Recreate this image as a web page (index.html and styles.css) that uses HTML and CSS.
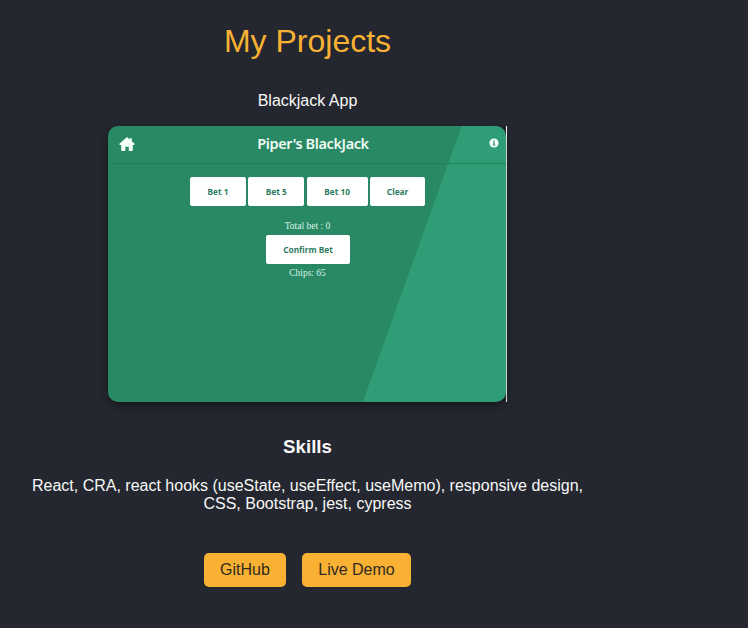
FILE: index.html
```html
<!DOCTYPE html>
<html lang="en">
<head>
<meta charset="utf-8">
<title>My Projects</title>
<link rel="stylesheet" href="styles.css">
</head>
<body>
<main class="projects">
  <h1 class="heading">My Projects</h1>
  <p class="name">Blackjack App</p>
  <div class="frame">
    <div class="preview">
      <header class="bar">
        <svg class="home" viewBox="0 0 16 14"><path d="M8 0 10.7 2.4V1.2H12.8V4.3L15.6 6.8Q16 7.6 15 7.9H13.8V13Q13.8 14 12.8 14H9.8V9.7H6.3V14H3.2Q2.2 14 2.2 13V7.9H1Q0 7.6.4 6.8Z"/></svg>
        <h2 class="game">Piper's BlackJack</h2>
        <svg class="info" viewBox="0 0 10 10"><circle cx="5" cy="5" r="4.6"/><path d="M4.3 2.5h1.4v1.2H4.3zM4 4.4h1.7v2.4h.6v.8H3.8v-.8h.6V5.2H4z"/></svg>
      </header>
      <div class="bets">
        <span class="bet one">Bet 1</span><span class="bet five">Bet 5</span><span class="bet ten">Bet 10</span><span class="bet clear">Clear</span>
      </div>
      <p class="total">Total bet : 0</p>
      <span class="bet confirm">Confirm Bet</span>
      <p class="chips">Chips: 65</p>
    </div>
  </div>
  <h3 class="skills">Skills</h3>
  <p class="list">React, CRA, react hooks (useState, useEffect, useMemo), responsive design, CSS, Bootstrap, jest, cypress</p>
  <div class="links">
    <a class="link github">GitHub</a>
    <a class="link demo">Live Demo</a>
  </div>
</main>
</body>
</html>
```
FILE: styles.css
```css
* { box-sizing: border-box; }
body {
  margin: 0;
  background: #24272f;
  color: #f8f8f8;
  font: 16px/18px "Liberation Sans", Arial, sans-serif;
}
h1, h2, h3, p { margin: 0; }
.projects {
  width: 615px;
  height: 628px;
  padding-top: 23px;
  display: flex;
  flex-direction: column;
  align-items: center;
  text-align: center;
}
.heading { font-size: 32px; font-weight: 400; line-height: 37px; color: #f8b133; }
.name { margin-top: 32px; }
.frame {
  width: 399px;
  height: 276px;
  margin-top: 16px;
  border-right: 1px solid #fff;
}
.preview {
  height: 276px;
  border-radius: 10px;
  display: flex;
  flex-direction: column;
  align-items: center;
  background: linear-gradient(109.73deg, #298965 0 71.1%, #2f9d76 71.25%);
  box-shadow: 0 4px 8px rgba(0, 0, 0, .4);
  overflow: hidden;
}
.bar {
  width: 100%;
  height: 38px;
  padding: 0 7px 2px 11px;
  display: flex;
  align-items: center;
  justify-content: space-between;
  border-bottom: 1px solid #237e5c;
}
.home { width: 16px; height: 14px; fill: #f5fffa; }
.game { margin: 0 0 2px 5px; font: 600 14.5px/20px "Noto Sans", sans-serif; letter-spacing: -.4px; color: #effaf4; }
.info { width: 10px; height: 10px; margin: 0 0 2px 3px; fill: #f2fffa; }
.info path { fill: #298965; }
.bets { display: flex; gap: 2.4px; margin: 13px 0 0 1px; }
.bet {
  height: 29px;
  border-radius: 2px;
  background: #fff;
  color: #2d7c61;
  font: 700 8.3px/29px "Noto Sans", sans-serif;
}
.one, .five { width: 56px; }
.ten { width: 61px; }
.clear { width: 55px; }
.confirm { width: 84px; margin-left: 2px; }
.total, .chips { font: 9.5px/12px "Liberation Serif", serif; color: #d9f3e7; padding-left: 1px; }
.total { margin: 14px 0 3px; }
.chips { margin-top: 3px; }
.skills { margin-top: 34px; font-size: 18.7px; line-height: 21px; }
.list { width: 567px; margin-top: 20px; }
.links { display: flex; gap: 16px; margin-top: 40px; }
.link {
  height: 34px;
  border-radius: 5px;
  background: #f8b133;
  color: #30291f;
  line-height: 34px;
}
.github { width: 82px; }
.demo { width: 109px; }
```
